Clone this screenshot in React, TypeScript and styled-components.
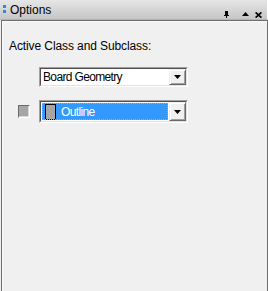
import React from "react";
import styled, { createGlobalStyle } from "styled-components";

const Global = createGlobalStyle`
  html, body { margin: 0; padding: 0; background: #f0f0f0; }
  body { font-family: "Liberation Sans", Arial, sans-serif; font-size: 12px; color: #000; }
  #root { width: 268px; height: 291px; overflow: hidden; }
`;

const Frame = styled.div`
  width: 268px;
  height: 291px;
  display: flex;
  flex-direction: column;
  background: #f0f0f0;
`;

const TitleBar = styled.div`
  height: 20px;
  box-sizing: border-box;
  display: flex;
  align-items: center;
  padding: 0 5px 0 3px;
  background: linear-gradient(#e6e6e6, #c6c6c6);
  border-bottom: 1px solid #b4b4b4;
  border-right: 1px solid #ffffff;
`;

const Grip = styled.div`
  width: 3px;
  display: flex;
  flex-direction: column;
  gap: 2px;
  margin-right: 4px;
  margin-top: -1px;
`;

const GripDot = styled.span`
  width: 3px;
  height: 3px;
  background: #2e86e8;
`;

const Title = styled.span`
  flex: 1;
  font-size: 12px;
  color: #000;
  line-height: 14px;
`;

const TitleButtons = styled.div`
  align-self: flex-end;
  margin-bottom: 1px;
  display: flex;
  align-items: flex-end;
`;

const TitleButton = styled.span<{ $gapAfter?: number; $lift?: number }>`
  display: flex;
  margin-right: ${(p) => p.$gapAfter ?? 0}px;
  margin-bottom: ${(p) => p.$lift ?? 0}px;
`;

const Panel = styled.div`
  flex: 1;
  margin-left: 1px;
  border: 1px solid #6d6d6d;
  border-bottom: none;
  box-shadow: inset 1px 1px 0 #fafafa;
  padding: 18px 0 0 7px;
  display: flex;
  flex-direction: column;
`;

const Label = styled.div`
  line-height: 14px;
  font-size: 12px;
  letter-spacing: -0.1px;
`;

const Row = styled.div<{ $top: number }>`
  display: flex;
  align-items: center;
  margin-top: ${(p) => p.$top}px;
  padding-left: 9px;
`;

const CheckSlot = styled.div`
  width: 21px;
  display: flex;
`;

const CheckBox = styled.div`
  width: 12px;
  height: 13px;
  box-sizing: border-box;
  background: #a6a6a6;
  border-top: 1px solid #6a6a6a;
  border-left: 1px solid #6a6a6a;
  border-right: 1px solid #ffffff;
  border-bottom: 1px solid #ffffff;
  box-shadow: inset -1px -1px 0 #d8d8d8;
  margin-top: -1px;
`;

const Combo = styled.div<{ $h: number }>`
  width: 149px;
  height: ${(p) => p.$h}px;
  box-sizing: border-box;
  border-top: 1px solid #a0a0a0;
  border-left: 1px solid #a0a0a0;
  border-right: 1px solid #ffffff;
  border-bottom: 1px solid #ffffff;
  display: flex;
`;

const ComboInner = styled.div`
  flex: 1;
  display: flex;
  box-sizing: border-box;
  border-top: 1px solid #505050;
  border-left: 1px solid #505050;
  border-right: 1px solid #e3e3e3;
  border-bottom: 1px solid #e3e3e3;
  background: #ffffff;
`;

const Field = styled.div<{ $selected?: boolean }>`
  flex: 1;
  display: flex;
  align-items: center;
  box-sizing: border-box;
  padding-left: 2px;
  margin: ${(p) => (p.$selected ? "1px" : "0")};
  background: ${(p) => (p.$selected ? "#3399ff" : "#ffffff")};
  color: ${(p) => (p.$selected ? "#ffffff" : "#000000")};
  border: ${(p) => (p.$selected ? "1px dotted #1a1a1a" : "none")};
  outline: ${(p) => (p.$selected ? "1px dotted #f29a28" : "none")};
  outline-offset: -1px;
  font-size: 12px;
  letter-spacing: -0.65px;
  line-height: 14px;
`;

const Swatch = styled.span`
  width: 11px;
  height: 16px;
  box-sizing: border-box;
  background: #a6a6a6;
  border: 1px solid #000000;
  margin-right: 5px;
`;

const DropButton = styled.div`
  width: 17px;
  box-sizing: border-box;
  background: #f0f0f0;
  border-top: 1px solid #f0f0f0;
  border-left: 1px solid #f0f0f0;
  border-right: 1px solid #696969;
  border-bottom: 1px solid #696969;
  box-shadow: inset 1px 1px 0 #ffffff, inset -1px -1px 0 #a0a0a0;
  display: flex;
  align-items: center;
  justify-content: center;
`;

const Arrow = () => (
  <svg width="7" height="4" viewBox="0 0 7 4">
    <path d="M0 0H7L3.5 4Z" fill="#000" />
  </svg>
);

const PinIcon = () => (
  <svg width="7" height="7" viewBox="0 0 7 7">
    <path d="M2 0H5V4H6V5H4V7H3V5H1V4H2Z" fill="#000" />
  </svg>
);

const UpIcon = () => (
  <svg width="7" height="4" viewBox="0 0 7 4">
    <path d="M0 4H7L3.5 0Z" fill="#000" />
  </svg>
);

const CloseIcon = () => (
  <svg width="7" height="6" viewBox="0 0 7 6">
    <path d="M0.6 0.4L6.4 5.6M6.4 0.4L0.6 5.6" stroke="#000" strokeWidth="1.7" />
  </svg>
);

const ComboBox: React.FC<{ h: number; selected?: boolean; children: React.ReactNode }> = ({
  h,
  selected,
  children,
}) => (
  <Combo $h={h}>
    <ComboInner>
      <Field $selected={selected}>{children}</Field>
      <DropButton>
        <Arrow />
      </DropButton>
    </ComboInner>
  </Combo>
);

export default function App() {
  return (
    <Frame>
      <Global />
      <TitleBar>
        <Grip>
          <GripDot />
          <GripDot />
        </Grip>
        <Title>Options</Title>
        <TitleButtons>
          <TitleButton $gapAfter={12}>
            <PinIcon />
          </TitleButton>
          <TitleButton $gapAfter={6} $lift={2}>
            <UpIcon />
          </TitleButton>
          <TitleButton>
            <CloseIcon />
          </TitleButton>
        </TitleButtons>
      </TitleBar>
      <Panel>
        <Label>Active Class and Subclass:</Label>
        <Row $top={14}>
          <CheckSlot />
          <ComboBox h={20}>Board Geometry</ComboBox>
        </Row>
        <Row $top={13}>
          <CheckSlot>
            <CheckBox />
          </CheckSlot>
          <ComboBox h={23} selected>
            <Swatch />
            Outline
          </ComboBox>
        </Row>
      </Panel>
    </Frame>
  );
}
